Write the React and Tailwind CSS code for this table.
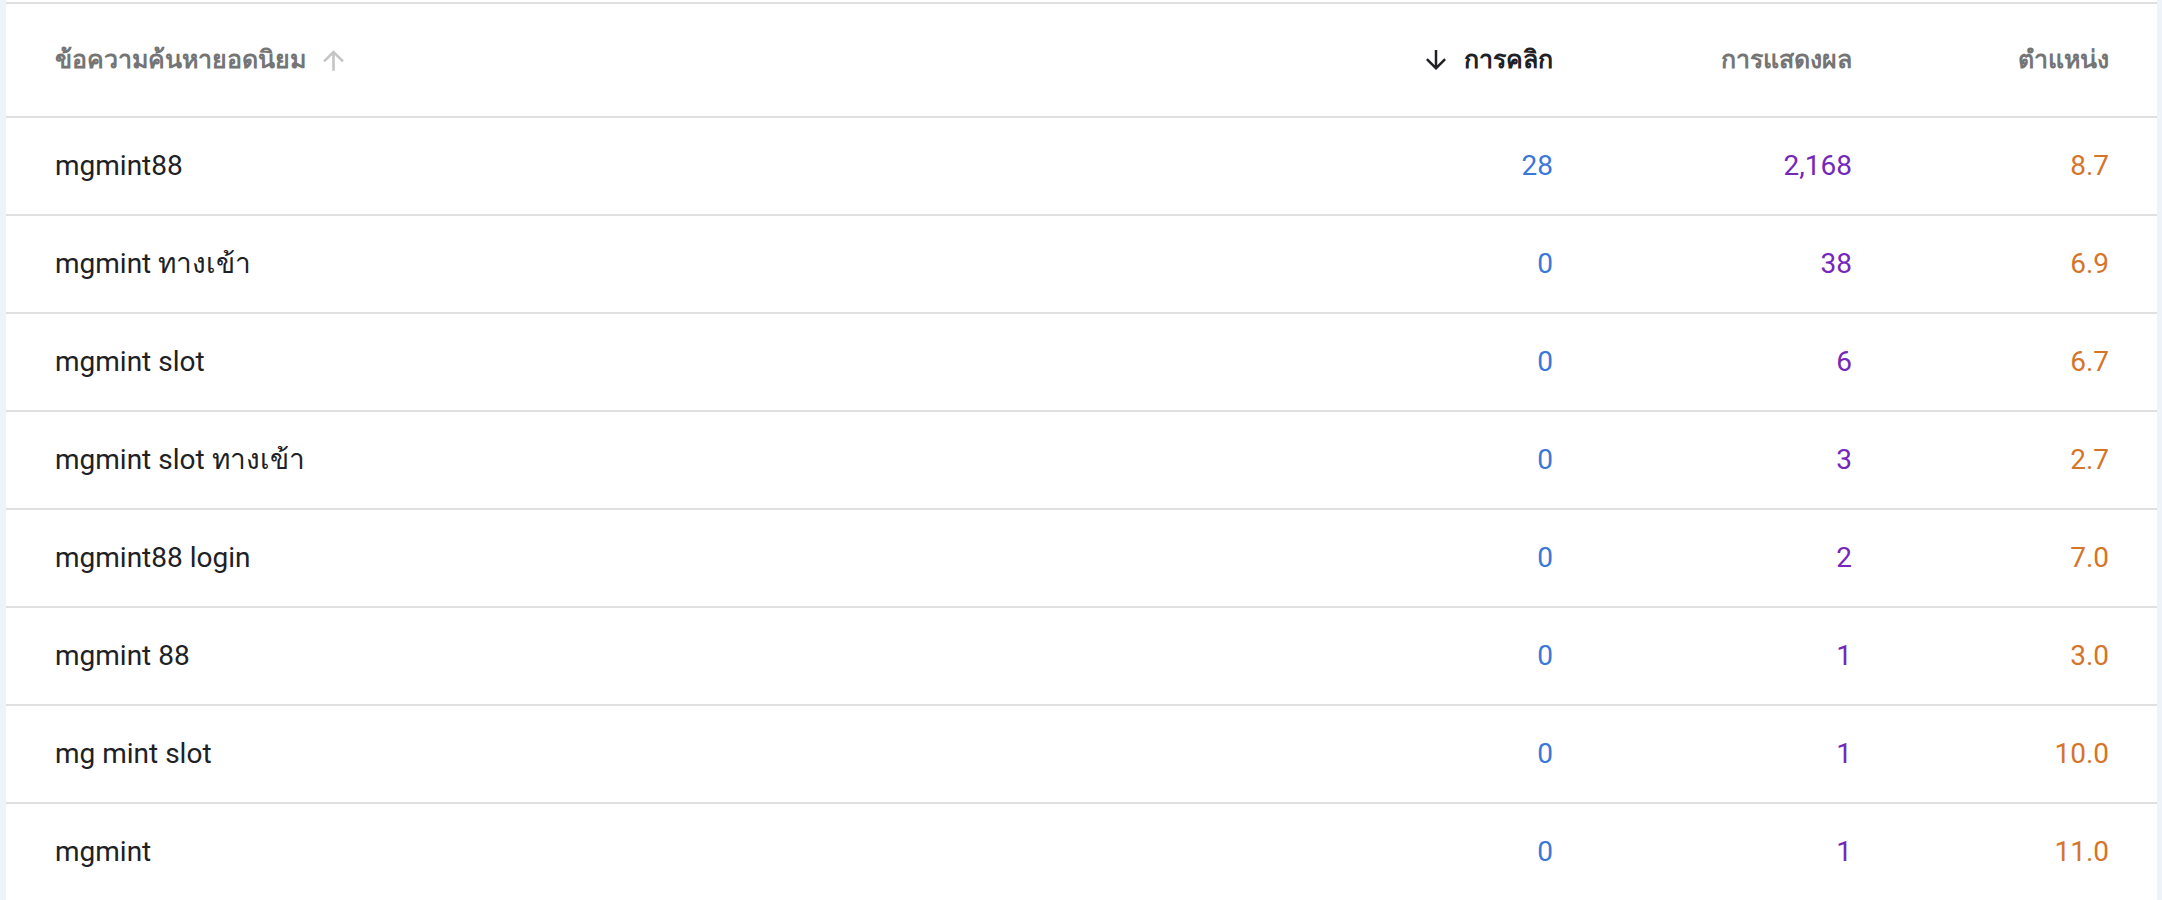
import React from 'react';

const rows = [
  { q: 'mgmint88', clicks: '28', imp: '2,168', pos: '8.7' },
  { q: 'mgmint ทางเข้า', clicks: '0', imp: '38', pos: '6.9' },
  { q: 'mgmint slot', clicks: '0', imp: '6', pos: '6.7' },
  { q: 'mgmint slot ทางเข้า', clicks: '0', imp: '3', pos: '2.7' },
  { q: 'mgmint88 login', clicks: '0', imp: '2', pos: '7.0' },
  { q: 'mgmint 88', clicks: '0', imp: '1', pos: '3.0' },
  { q: 'mg mint slot', clicks: '0', imp: '1', pos: '10.0' },
  { q: 'mgmint', clicks: '0', imp: '1', pos: '11.0' },
];

const ArrowUp = ({ className }) => (
  <svg viewBox="0 0 24 24" className={className} fill="currentColor">
    <path d="M4 12l1.41 1.41L11 7.83V20h2V7.83l5.58 5.59L20 12l-8-8-8 8z" />
  </svg>
);

const ArrowDown = ({ className }) => (
  <svg viewBox="0 0 24 24" className={className} fill="currentColor">
    <path d="M20 12l-1.41-1.41L13 16.17V4h-2v12.17l-5.58-5.59L4 12l8 8 8-8z" />
  </svg>
);

export default function App() {
  const grid = 'grid grid-cols-[1fr_300px_299px_257px] items-center pl-[49px] pr-[48px]';
  return (
    <div className="min-h-screen bg-[#eef2f9] pl-[6px] pr-[5px] font-['Roboto','Noto_Sans',sans-serif]">
      <div className="bg-white pt-[2px] h-[900px] overflow-hidden">
        <div className="border-t-2 border-[#e0e0e0]">
          <div className={`${grid} h-[114px] border-b-2 border-[#e0e0e0] text-[25px] font-bold`}>
            <div className="flex items-center gap-[12px] text-[#757575]">
              <span>ข้อความค้นหายอดนิยม</span>
              <ArrowUp className="w-[31px] h-[31px] text-[#c4c4c4]" />
            </div>
            <div className="flex items-center justify-end gap-[13px] text-[#202124]">
              <ArrowDown className="w-[30px] h-[30px]" />
              <span>การคลิก</span>
            </div>
            <div className="text-right text-[#757575]">การแสดงผล</div>
            <div className="text-right text-[#757575]">ตำแหน่ง</div>
          </div>
          {rows.map((r) => (
            <div key={r.q} className={`${grid} h-[98px] border-b-2 border-[#e0e0e0] text-[28px]`}>
              <div className="text-[#202124]">{r.q}</div>
              <div className="text-right text-[#3a78d8]">{r.clicks}</div>
              <div className="text-right text-[#7627bb]">{r.imp}</div>
              <div className="text-right text-[#d5752a]">{r.pos}</div>
            </div>
          ))}
        </div>
      </div>
    </div>
  );
}
